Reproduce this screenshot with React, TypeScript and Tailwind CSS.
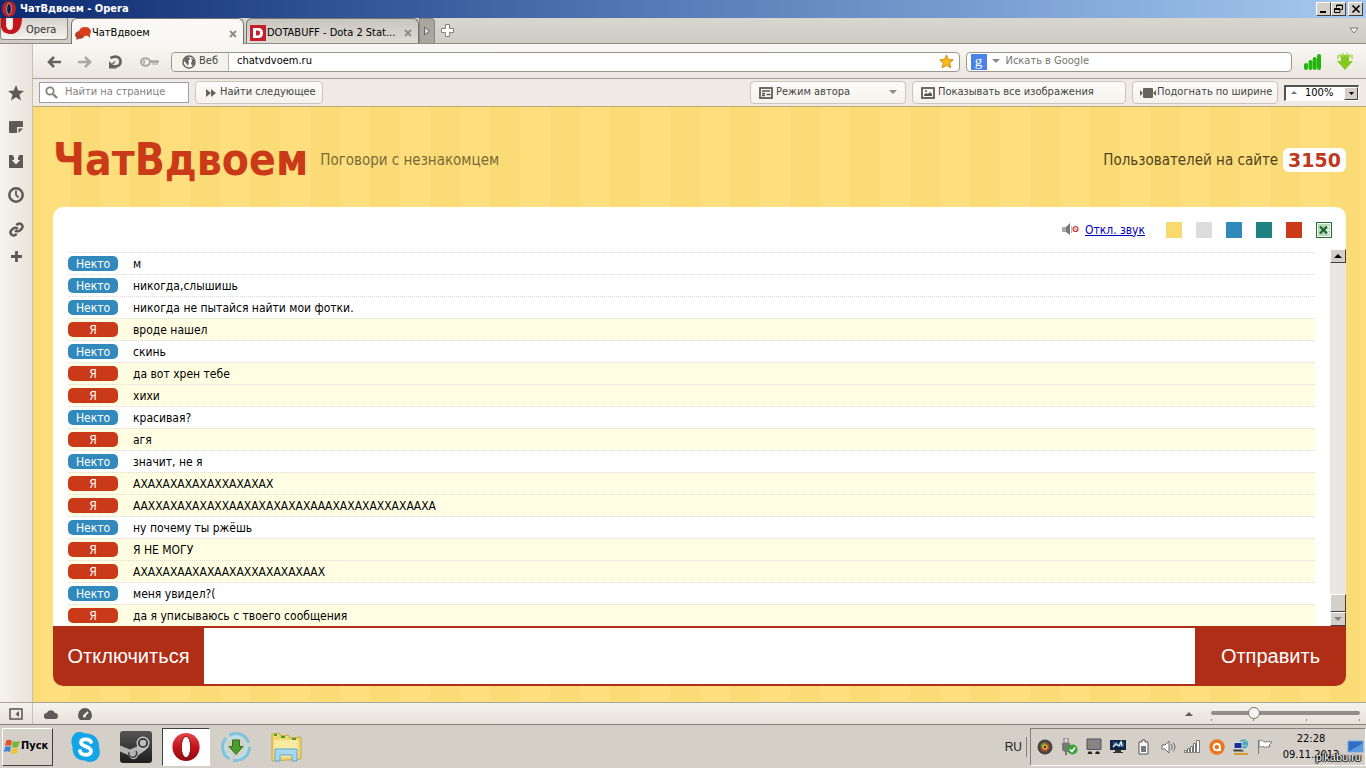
import React from "react";

type Author = "other" | "me";

const messages: { from: Author; text: string }[] = [
  { from: "other", text: "м" },
  { from: "other", text: "никогда,слышишь" },
  { from: "other", text: "никогда не пытайся найти мои фотки." },
  { from: "me", text: "вроде нашел" },
  { from: "other", text: "скинь" },
  { from: "me", text: "да вот хрен тебе" },
  { from: "me", text: "хихи" },
  { from: "other", text: "красивая?" },
  { from: "me", text: "агя" },
  { from: "other", text: "значит, не я" },
  { from: "me", text: "АХАХАХАХАХАХХАХАХАХ" },
  { from: "me", text: "ААХХАХАХАХАХХААХАХАХАХАХАААХАХАХАХХАХААХА" },
  { from: "other", text: "ну почему ты ржёшь" },
  { from: "me", text: "Я НЕ МОГУ" },
  { from: "me", text: "АХАХАХААХАХААХАХХАХАХАХААХ" },
  { from: "other", text: "меня увидел?(" },
  { from: "me", text: "да я уписываюсь с твоего сообщения" },
];

const themes = [
  { name: "Жёлтая", color: "bg-[#f9da71]" },
  { name: "Серая", color: "bg-[#dcdcdc]" },
  { name: "Синяя", color: "bg-[#318abb]" },
  { name: "Бирюзовая", color: "bg-[#1f8282]" },
  { name: "Красная", color: "bg-[#cb3a18]" },
];

const toolButton =
  "flex items-center h-[23px] rounded border border-[#c9c5be] bg-gradient-to-b from-[#fdfcfa] to-[#f5f2ea] text-[#444]";

function OperaLogo({ size }: { size: number }) {
  return (
    <svg width={size} height={size} viewBox="0 0 32 32" aria-hidden="true">
      <defs>
        <linearGradient id={`op${size}`} x1="0" y1="0" x2="0" y2="1">
          <stop offset="0" stopColor="#e8474a" />
          <stop offset="0.5" stopColor="#c4151c" />
          <stop offset="1" stopColor="#8d0b10" />
        </linearGradient>
      </defs>
      <ellipse cx="16" cy="16" rx="14.5" ry="15" fill={`url(#op${size})`} />
      <ellipse cx="16" cy="16" rx="5" ry="11.5" fill="#fff" stroke="#8d0b10" />
    </svg>
  );
}

function TitleBar() {
  const b =
    "flex h-[14px] w-[15px] items-center justify-center border border-t-white border-l-white border-r-[#404040] border-b-[#404040] bg-[#d4d0c8]";
  return (
    <header className="flex h-[18px] shrink-0 items-center bg-gradient-to-r from-[#0c2a70] via-[#5a7cb8] to-[#a6caf0] pl-[2px] pr-[3px] text-white">
      <svg width="14" height="16" viewBox="0 0 14 16" aria-hidden="true">
        <ellipse cx="7" cy="8" rx="7" ry="8" fill="#b5232b" />
        <ellipse cx="7" cy="8" rx="2.4" ry="5.6" fill="#0d2350" stroke="#e9a0a0" strokeWidth="0.8" />
      </svg>
      <h1 className="ml-1 flex-1 text-[11px] leading-[18px] font-bold">ЧатВдвоем - Opera</h1>
      <button className={b} aria-label="Свернуть">
        <svg width="11" height="10"><path d="M2 8h6" stroke="#000" strokeWidth="2" /></svg>
      </button>
      <button className={b} aria-label="Восстановить">
        <svg width="11" height="10" fill="none" stroke="#000">
          <path d="M3.500 3.500V1h6v4.500H8M3 1.500h7M1.500 4.500h5.500v4h-5.500zM1 5.500h6" />
        </svg>
      </button>
      <button className={`${b} ml-[2px]`} aria-label="Закрыть">
        <svg width="10" height="10"><path d="M1.500 1.500l7 7M8.500 1.500l-7 7" stroke="#000" strokeWidth="1.700" /></svg>
      </button>
    </header>
  );
}

function CloseX() {
  return (
    <svg width="8" height="8"><path d="M1 1l6 6M7 1L1 7" stroke="#8c8a85" strokeWidth="1.800" /></svg>
  );
}

function TabBar() {
  return (
    <nav className="flex h-[26px] shrink-0 items-end border-b border-[#8f8b84] bg-gradient-to-b from-[#d9d6d0] to-[#cfccc5] text-[11px]" aria-label="Вкладки">
      <button className="flex h-[22px] w-[68px] items-start self-start rounded-b border border-t-0 border-[#8b8780] bg-gradient-to-b from-[#d5d1ca] to-[#f5f3ef] leading-[24px]">
        <svg width="22" height="17" viewBox="0 0 22 17" aria-hidden="true">
          <path d="M0 0h21c0 9-4 16-11 16C5 16 1 14 0 9z" fill="#c4151c" />
          <path d="M5 0h7v7c0 4-1 5-3 5s-4-2-4-5z" fill="#f5efec" />
        </svg>
        <span className="ml-[3px] text-[#333]">Opera</span>
      </button>
      <div className="ml-[3px] -mb-px flex h-[26px] w-[173px] items-center rounded-t-md border border-b-0 border-[#77746e] bg-[#faf8f4] pt-1 pl-[3px] pr-[6px]">
        <svg width="16" height="13" viewBox="0 0 16 13" aria-hidden="true">
          <path d="M5 4c-3 0-5 1.800-5 4 0 1 .6 2 1.600 2.700L1.400 13l2.700-1.300C8 12 9.500 10 9.500 8z" fill="#b83a20" />
          <ellipse cx="10" cy="4.500" rx="6" ry="4.500" fill="#d8401c" />
          <path d="M12 8l3 3V7z" fill="#d8401c" />
        </svg>
        <span className="ml-px flex-1 truncate text-black">ЧатВдвоем</span>
        <button aria-label="Закрыть вкладку"><CloseX /></button>
      </div>
      <div className="ml-[2px] flex h-[25px] w-[173px] items-center rounded-t-md border border-b-0 border-[#77746e] bg-gradient-to-b from-[#c9c6bf] to-[#dedbd5] pt-1 pl-[3px] pr-[6px]">
        <svg width="16" height="16" viewBox="0 0 16 16" aria-hidden="true">
          <path d="M0 0h16v16H0z" fill="#c3202b" />
          <path d="M3 3h5c3.500 0 5 2 5 5s-1.500 5-5 5H3zm3 2.500v5h1.700c1.500 0 2.300-.8 2.300-2.500S9.200 5.500 7.700 5.500z" fill="#fff" fillRule="evenodd" />
        </svg>
        <span className="ml-px flex-1 whitespace-nowrap text-black">DOTABUFF - Dota 2 Stat...</span>
        <button aria-label="Закрыть вкладку"><CloseX /></button>
      </div>
      <button className="flex h-[25px] w-4 items-center justify-center rounded-tr border border-b-0 border-[#8b8780] bg-[#a9a6a0]" aria-label="Следующие вкладки">
        <svg width="8" height="10"><path d="M1.500 1l5 4-5 4z" fill="#ddd" stroke="#666" /></svg>
      </button>
      <button className="ml-[6px] self-center" aria-label="Новая вкладка">
        <svg className="block" width="13" height="13"><path d="M4.500.5h4v4h4v4h-4v4h-4v-4h-4v-4h4z" fill="#fff" stroke="#85827c" /></svg>
      </button>
      <button className="mr-[7px] ml-auto self-center" aria-label="Закрытые вкладки">
        <svg width="10" height="7"><path d="M1 1h8L5 6z" fill="#fff" stroke="#77746e" /></svg>
      </button>
    </nav>
  );
}

function AddressBar() {
  return (
    <div className="flex h-[35px] items-center border-b border-[#a5a19a] bg-gradient-to-b from-[#faf8f4] to-[#eae6df] pt-px pr-[13px] pl-[14px] text-[11px]">
      <div className="flex w-[124px] items-center justify-between text-[#66635e]">
        <button aria-label="Назад">
          <svg width="14" height="12" fill="none" stroke="currentColor" strokeWidth="2.600"><path d="M7 1L2 6l5 5M2 6h12" /></svg>
        </button>
        <button aria-label="Вперёд">
          <svg width="14" height="12" fill="none" stroke="#aaa7a1" strokeWidth="2.600"><path d="M7 1l5 5-5 5M12 6H0" /></svg>
        </button>
        <button aria-label="Обновить">
          <svg width="15" height="14" viewBox="0 0 15 14"><path d="M2.500 3.200c2-1.400 3.300-1.600 5-1.600 3 0 5 2 5 4.900s-2 5-5 5H5" fill="none" stroke="currentColor" strokeWidth="2.800" /><path d="M1 6v7.500h7.500z" fill="currentColor" /><path d="M4 9.500L7 6.500" stroke="currentColor" strokeWidth="1.500" /></svg>
        </button>
        <button className="mr-3" aria-label="Пароли">
          <svg width="19" height="10" fill="none" stroke="#aaa7a1"><ellipse cx="5.500" cy="5" rx="4.500" ry="3.700" strokeWidth="2" /><path d="M4 3.500v3" strokeWidth="2" /><path d="M9.500 4.500H19" strokeWidth="2.600" /><path d="M13.500 5v3M16.500 5v3" strokeWidth="1.600" /></svg>
        </button>
      </div>
      <form className="flex h-5 flex-1 items-center rounded border border-[#9a968f] bg-white" onSubmit={(e) => e.preventDefault()}>
        <button type="button" className="flex h-[18px] w-[57px] items-center rounded-l border-r border-[#bbb7b0] bg-[#f4f2ed] pl-[10px] text-[#444]">
          <svg width="14" height="14" viewBox="0 0 14 14" aria-hidden="true"><circle cx="7" cy="7" r="6" fill="#fff" stroke="#66635e" strokeWidth="1.500" /><path d="M3 3l4-1 1 2-2 2 1 1-1 4-2-3-2-2zM9 3l3 2v4l-2 2-1-3 1-2z" fill="#66635e" /></svg>
          <span className="ml-[3px]">Веб</span>
        </button>
        <input className="min-w-0 flex-1 px-2 text-black outline-none" aria-label="Адрес" defaultValue="chatvdvoem.ru" />
        <button type="button" className="mr-[5px]" aria-label="В закладки">
          <svg width="15" height="15" viewBox="0 0 15 15"><path d="M7.500 1l2 4.500 4.700.4-3.600 3.200 1.200 4.700-4.300-2.600-4.300 2.600 1.200-4.700L.8 5.900l4.700-.4z" fill="#fbb917" stroke="#d58a12" /></svg>
        </button>
      </form>
      <form className="ml-[6px] flex h-5 w-1/4 items-center rounded border border-[#9a968f] bg-white pl-1" onSubmit={(e) => e.preventDefault()}>
        <span className="flex h-4 w-4 items-center justify-center bg-[#4b82e8] pb-[2px] font-['Liberation_Serif',serif] text-[15px] leading-4 text-white">g</span>
        <svg className="ml-[5px]" width="8" height="5" aria-hidden="true"><path d="M0 0h8L4 4z" fill="#8c8a85" /></svg>
        <input className="ml-[6px] min-w-0 flex-1 outline-none placeholder:text-[#77746f]" aria-label="Поиск" placeholder="Искать в Google" />
      </form>
      <button className="ml-3" aria-label="Сигнал">
        <svg width="17" height="16" fill="#22b50c"><rect x="0" y="9" width="4" height="7" rx="2" /><rect x="4.500" y="6" width="4" height="10" rx="2" /><rect x="8.700" y="3" width="4" height="13" rx="2" /><rect x="13" y="0" width="4" height="16" rx="2" /></svg>
      </button>
      <button className="ml-4" aria-label="Загрузки">
        <svg width="16" height="18"><path d="M4 2h8v6h4l-8 9-8-9h4z" fill="#85c81e" /><path d="M1 2v4M15 2v4M3 1v3M13 1v3M6 0v4M10 0v4" stroke="#a5d850" strokeWidth="1.500" /></svg>
      </button>
    </div>
  );
}

function FindBar() {
  return (
    <div className="flex h-7 items-center gap-[6px] border-b border-[#b8a878] bg-[#efeae4] pr-[7px] pl-[6px] text-[11px]">
      <label className="flex h-[21px] w-[150px] items-center border border-[#9a9eb0] bg-white pl-[5px]">
        <svg width="13" height="13" fill="none" stroke="#85827c" aria-hidden="true"><circle cx="5" cy="5" r="3.700" strokeWidth="1.800" /><path d="M8 8l4 4" strokeWidth="2.400" /></svg>
        <input className="ml-[7px] min-w-0 flex-1 outline-none placeholder:text-[#85827f]" placeholder="Найти на странице" aria-label="Найти на странице" />
      </label>
      <button className={`${toolButton} mr-auto px-[6px]`}>
        <svg className="mx-1" width="10" height="8" fill="#66635e"><path d="M0 0l5 4-5 4zM5 0l5 4-5 4z" /></svg>
        <span>Найти следующее</span>
      </button>
      <label className={`${toolButton} w-[156px] px-2`}>
        <svg width="14" height="12" fill="none" stroke="#55524e" aria-hidden="true"><rect x="1" y="1" width="12" height="10" strokeWidth="1.700" /><path d="M3 4h8M3 6.500h3M3 8.500h3M7.500 7.500h4" strokeWidth="1.500" /></svg>
        <select className="ml-[3px] flex-1 appearance-none outline-none" aria-label="Режим отображения"><option>Режим автора</option></select>
        <svg width="8" height="5" aria-hidden="true"><path d="M0 0h8L4 4z" fill="#8c8a85" /></svg>
      </label>
      <button className={`${toolButton} w-[214px] px-2`}>
        <svg width="14" height="12" fill="none" stroke="#55524e"><rect x="1" y="1" width="12" height="10" strokeWidth="1.700" /><path d="M3 9V8l2-2 2 1 2-2 2 2v2z" fill="#55524e" stroke="none" /><circle cx="5" cy="4" r="1" fill="#55524e" stroke="none" /></svg>
        <span className="ml-[3px] whitespace-nowrap">Показывать все изображения</span>
      </button>
      <button className={`${toolButton} w-[146px] pl-[7px]`}>
        <svg className="shrink-0" width="16" height="10" fill="#66635e"><rect x="3" y="0" width="10" height="10" rx="1" /><path d="M0 2l3 3-3 3zM16 2l-3 3 3 3z" /></svg>
        <span className="ml-px whitespace-nowrap">Подогнать по ширине</span>
      </button>
      <label className="flex h-4 w-[75px] items-center border border-t-2 border-l-2 border-[#fff] border-t-[#55524e] border-l-[#55524e] bg-white pl-[5px] text-black">
        <svg width="6" height="4" aria-hidden="true"><path d="M0 3h6L3 0z" fill="#77746e" /></svg>
        <select className="ml-2 min-w-0 flex-1 appearance-none outline-none" aria-label="Масштаб"><option>100%</option></select>
        <span className="flex h-[13px] w-[14px] items-center justify-center border border-white border-r-[#404040] border-b-[#404040] bg-[#d4d0c8]">
          <svg width="5" height="3" aria-hidden="true"><path d="M0 0h5L2.500 3z" /></svg>
        </span>
      </label>
    </div>
  );
}

function SidePanel() {
  const item = "flex h-[34px] items-center justify-center";
  return (
    <aside className="flex w-[33px] shrink-0 flex-col items-center border-r border-[#c9c1a8] bg-gradient-to-r from-[#f6f3ed] to-[#e8e4dc] pt-8 text-[#5e5b56]">
      <button className={item} aria-label="Закладки"><svg width="16" height="16" viewBox="0 0 16 16"><path d="M8 0l2.200 5.500 5.800.4-4.500 3.700L13 15.500 8 12.300l-5 3.200 1.500-5.900L0 5.900l5.800-.4z" fill="currentColor" /></svg></button>
      <button className={item} aria-label="Заметки"><svg width="14" height="14"><path d="M1 1h12a1 1 0 011 1v5H8v6H1a1 1 0 01-1-1V2a1 1 0 011-1zM9.500 8.500H14L9.500 13z" fill="currentColor" /></svg></button>
      <button className={item} aria-label="Загрузки"><svg width="14" height="13"><path d="M0 0h4v1.500H5V5H2.800L7 9.500 11.200 5H9V1.500h1V0h4v13H0z" fill="currentColor" /></svg></button>
      <button className={item} aria-label="История"><svg width="16" height="16" fill="none" stroke="currentColor"><circle cx="8" cy="8" r="6.700" strokeWidth="2.500" /><path d="M8 3.500V8l2.500 2.500" strokeWidth="1.800" /></svg></button>
      <button className={item} aria-label="Ссылки"><svg width="15" height="15" viewBox="0 0 24 24" fill="none" stroke="currentColor" strokeWidth="4"><path d="M10 13a5 5 0 007.500.5l3-3a5 5 0 00-7-7l-1.800 1.700M14 11a5 5 0 00-7.500-.5l-3 3a5 5 0 007 7l1.800-1.700" /></svg></button>
      <button className="flex h-5 items-center" aria-label="Добавить панель"><svg width="11" height="11"><path d="M5.500 0v11M0 5.500h11" stroke="currentColor" strokeWidth="2.800" /></svg></button>
    </aside>
  );
}

function Message({ from, text }: { from: Author; text: string }) {
  const mine = from === "me";
  return (
    <li className={`flex h-[22px] shrink-0 items-center border-t border-dotted border-[#dcdcd2] ${mine ? "bg-[#fffee2]" : "bg-white"}`}>
      <span className={`h-[15px] w-[50px] rounded-[5px] text-center leading-4 text-white ${mine ? "bg-[#cb3a18]" : "bg-[#318abb]"}`}>
        {mine ? "Я" : "Некто"}
      </span>
      <span className="ml-[15px] text-black">{text}</span>
    </li>
  );
}

function ChatPage() {
  return (
    <main className="flex min-h-0 flex-1 flex-col bg-[repeating-linear-gradient(90deg,#fadb75_0_7px,#ffdf7d_7px_37px,#fadb75_37px_60px)] px-5 pb-4">
      <div className="flex h-[100px] shrink-0 items-center pt-[6px]">
        <h2 className="text-[44px] leading-none font-bold text-[#cb3a18]">ЧатВдвоем</h2>
        <p className="ml-3 flex-1 text-[15px] text-[#7a6a38]">Поговори с незнакомцем</p>
        <p className="text-[15px] text-[#4f431c]">Пользователей на сайте</p>
        <strong className="ml-[5px] h-6 rounded-md bg-white px-[5px] font-['DejaVu_Sans',sans-serif] text-[19px] leading-6 text-[#c0391f]">3150</strong>
      </div>
      <section className="flex min-h-0 flex-1 flex-col overflow-hidden rounded-[10px] bg-white text-[12px]">
        <div className="flex h-[42px] shrink-0 items-center justify-end gap-[14px] pt-[3px] pr-[14px]">
          <svg className="-mr-2" width="17" height="13" aria-hidden="true"><path d="M0 4h4v5H0z" fill="#aaa" /><path d="M4 4l4-4v12L4 9z" fill="#777" /><path d="M9.500 3v7" stroke="#bbb" /><circle cx="13.500" cy="6" r="2.500" fill="#fff" stroke="#c33" strokeWidth="1.200" /><path d="M12 4.500l3 3" stroke="#c33" /></svg>
          <a href="#sound" className="mr-[7px] text-[#00b] underline">Откл. звук</a>
          {themes.map((t) => (
            <button key={t.name} aria-label={t.name} className={`h-4 w-4 ${t.color}`} />
          ))}
          <button aria-label="Сохранить в Excel">
            <svg className="block" width="16" height="16"><rect x=".5" y=".5" width="15" height="15" fill="#f0f8f0" stroke="#2d6b35" /><path d="M2 2h12v12H2z" fill="#b9dab8" /><path d="M10 4h3v2h-2zM11 7h2v2h-2zM10 10h3v2h-3z" fill="#fff" /><path d="M4 4.500l7 7M11 4.500l-7 7" stroke="#1f6b2c" strokeWidth="2.400" /></svg>
          </button>
        </div>
        <div className="flex min-h-0 flex-1">
          <ul className="ml-[15px] flex min-w-0 flex-1 flex-col justify-end overflow-hidden">
            {messages.map((m, i) => (
              <Message key={i} {...m} />
            ))}
          </ul>
          <div className="ml-[15px] flex w-4 flex-col bg-[#e9e7e3]">
            <button className="flex h-[14px] items-center justify-center border border-white border-r-[#404040] border-b-[#404040] bg-[#d4d0c8]" aria-label="Вверх">
              <svg width="8" height="5"><path d="M0 4h8L4 0z" /></svg>
            </button>
            <div className="flex-1" />
            <div className="h-[18px] border border-white border-r-[#404040] border-b-[#404040] bg-[#d4d0c8]" />
            <button className="flex h-[14px] items-center justify-center border border-white border-r-[#404040] border-b-[#404040] bg-[#d4d0c8]" aria-label="Вниз">
              <svg width="8" height="5"><path d="M0 0h8L4 4z" fill="#85827c" /></svg>
            </button>
          </div>
        </div>
        <form className="flex h-[60px] shrink-0 bg-[#b02d16] font-['Liberation_Sans',sans-serif] text-[20px] text-white" onSubmit={(e) => e.preventDefault()}>
          <button type="button" className="w-[151px]">Отключиться</button>
          <input className="my-[2px] min-w-0 flex-1 bg-white px-3 text-black outline-none" aria-label="Сообщение" />
          <button type="submit" className="w-[151px]">Отправить</button>
        </form>
      </section>
    </main>
  );
}

function StatusBar() {
  return (
    <footer className="flex h-[22px] shrink-0 items-center border-t border-[#a8a49c] bg-gradient-to-b from-[#f5f2ec] to-[#e6e2da] pr-[6px] text-[#5e5b56]">
      <button className="flex h-full w-[33px] items-center justify-center border-r border-[#c5c1b9]" aria-label="Панели"><svg width="14" height="12"><rect x="1" y="1" width="12" height="10" fill="none" stroke="currentColor" strokeWidth="1.600" /><path d="M10 3v6L6.500 6z" fill="currentColor" /></svg></button>
      <button className="ml-[11px]" aria-label="Opera Link"><svg className="block" width="14" height="10"><path d="M3 10a3 3 0 01-.3-6A4.500 4.500 0 0111 4a3 3 0 010 6z" fill="currentColor" /></svg></button>
      <button className="ml-5" aria-label="Opera Turbo"><svg className="block" width="14" height="12"><path d="M2 12a7 7 0 1110 0z" fill="currentColor" /><path d="M6.500 7.500L10 4" stroke="#f0ede6" strokeWidth="1.800" /><circle cx="6.500" cy="8" r="1.600" fill="#f0ede6" /></svg></button>
      <button className="mr-[18px] ml-auto" aria-label="Меню масштаба"><svg className="block" width="8" height="4"><path d="M0 4h8L4 0z" fill="currentColor" /></svg></button>
      <div className="flex w-[149px] flex-col">
        <input type="range" aria-label="Масштаб страницы" min={0} max={100} defaultValue={27}
          className="h-3 w-full appearance-none bg-transparent [&::-webkit-slider-runnable-track]:h-1 [&::-webkit-slider-runnable-track]:rounded-full [&::-webkit-slider-runnable-track]:bg-[#918e88] [&::-webkit-slider-thumb]:-mt-1 [&::-webkit-slider-thumb]:h-3 [&::-webkit-slider-thumb]:w-3 [&::-webkit-slider-thumb]:appearance-none [&::-webkit-slider-thumb]:rounded-full [&::-webkit-slider-thumb]:border [&::-webkit-slider-thumb]:border-[#77746e] [&::-webkit-slider-thumb]:bg-[#f7f5f1]" />
        <svg width="149" height="2" stroke="#918e88" aria-hidden="true"><path d="M.5 0v2M42.500 0v2M95.500 0v2M148.500 0v2" /></svg>
      </div>
    </footer>
  );
}

function Tray() {
  return (
    <div className="flex items-center gap-2">
      <svg width="16" height="16"><circle cx="8" cy="8" r="7.500" fill="#444" /><circle cx="8" cy="8" r="4.500" fill="#b84c28" /><path d="M3.500 8a4.500 4.500 0 014.500-4.500V8z" fill="#5b9c3a" /><circle cx="8" cy="8" r="2.500" fill="#e8c23a" /><circle cx="8" cy="8" r="1.200" fill="#222" /></svg>
      <svg width="17" height="17"><path d="M3 0h4v5h2v5c0 3-1 3-3 4v3H4v-3c-2-1-3-1-3-4V5h2z" fill="#777" /><path d="M3 0h4v5H3z" fill="#ddd" stroke="#777" /><circle cx="11.500" cy="11.500" r="5" fill="#36a436" /><path d="M9 11.500l2 2 3-4" stroke="#fff" strokeWidth="1.700" fill="none" /></svg>
      <svg width="16" height="17"><path d="M1 1h14v10.500H1z" fill="#858585" stroke="#555" /><path d="M2.500 13.500h3l1 2.500h-5zM10 13.500h3l1 2.500H9z" fill="#222" /></svg>
      <svg width="17" height="15"><path d="M0 1h16v10H0z" fill="#15263c" /><path d="M3 3h5v4H3zM9 5l2-3 3 2v4h-4z" fill="#2a5a94" /><path d="M3 8l3-3 3 2 2-4 1 4" stroke="#cfe8f8" strokeWidth="1.500" fill="none" /><path d="M5 11h6v2h2v1H3v-1h2z" fill="#333" /></svg>
      <svg className="mx-[3px]" width="11" height="16"><path d="M1 3h3V1h3v2h3v12H1z" fill="#fff" stroke="#555" /><path d="M3 7h5v6H3z" fill="#777" /></svg>
      <svg className="ml-px" width="15" height="14" fill="#fff" stroke="#666"><path d="M1 5h3l4-4v12L4 9H1z" /><path d="M10 4c1.500 2 1.500 4 0 6M12 2.500c2.500 3 2.500 6 0 9" fill="none" /></svg>
      <svg width="17" height="13" fill="#fff" stroke="#777"><path d="M.5 10.500h2v2h-2zM3.500 8.500h2v4h-2zM6.500 6.500h2v6h-2zM9.500 3.500h2v9h-2zM12.500.5h3v12h-3z" /></svg>
      <svg width="16" height="16"><circle cx="8" cy="8" r="7.700" fill="#ee751d" /><path d="M11 12V8a3.200 3.200 0 10-3 3.200c2 0 3-1.300 3-3" fill="none" stroke="#fff" strokeWidth="2" /></svg>
      <svg width="16" height="16"><circle cx="10.500" cy="5" r="4.700" fill="#4aa5cf" /><path d="M8 3c2-2 3 0 5-1M7 7c3-1 4 1 7-1" stroke="#a8dc90" fill="none" /><path d="M1 3.500h8v6H1z" fill="#1b2f9c" stroke="#ddd" /><path d="M0 10.500h9l2 2H1z" fill="#444" /><path d="M1 15h14" stroke="#d99a28" strokeWidth="2" /></svg>
      <svg width="17" height="16" fill="#fff" stroke="#777"><path d="M1.500 1v14M2 2c3-2 4 1 6 1s3-1 7 0l-3 3 1 2c-2-1-4 1-6 0s-3 0-5 0z" /></svg>
    </div>
  );
}

function Taskbar() {
  return (
    <footer className="relative flex h-11 shrink-0 items-center border-t border-[#85827c] bg-[#d4d0c8] pl-[2px]">
      <button className="flex h-[38px] w-[51px] items-center border border-t-white border-l-white border-r-[#404040] border-b-[#404040] pl-px text-[11px] font-bold">
        <svg width="17" height="16" viewBox="0 0 17 16" aria-hidden="true"><path d="M2 2c2-2 4-1 6 0L7 7C5 6 3 6 1 7z" fill="#e2552b" /><path d="M9 2c2 1 4 1 7 0l-2 6c-2 1-4 1-6 0z" fill="#74b73a" /><path d="M1 8c2-1 4-1 6 0l-1 5c-2-1-4-1-6 0z" fill="#3f86d8" /><path d="M8 9c2 1 4 1 6 0l-1 5c-2 1-4 1-6 0z" fill="#f3c12e" /></svg>
        <span>Пуск</span>
      </button>
      <div className="ml-[17px] flex flex-1 items-center">
        <button className="w-8" aria-label="Skype">
          <svg width="32" height="32" viewBox="0 0 32 32"><path d="M9 1c3 0 4 .5 6 1.500C24 2 30 8 29 17c3 7-2 14-9 14-3 0-4-1-5-1.500C7 30 2 24 2.500 16-.500 9 3 1 9 1z" fill="#12a5e8" /><path d="M21 11c-1-3-9-4-10 0-.6 5 10 4 10 9 0 5-10 5-11 0" fill="none" stroke="#fff" strokeWidth="3.800" strokeLinecap="round" /></svg>
        </button>
        <button className="ml-[18px] w-8" aria-label="Steam">
          <svg width="32" height="32" viewBox="0 0 32 32"><defs><linearGradient id="st" x1="0" y1="0" x2="0" y2="1"><stop offset="0" stopColor="#555" /><stop offset="1" stopColor="#1f1e1e" /></linearGradient></defs><rect width="32" height="32" rx="3" fill="url(#st)" /><path d="M0 14.500l10 4 7-3 1-5 11 5-4 4-7 5c-1 5-8 5-9 0l-9-4z" fill="#b5b5b5" /><circle cx="23" cy="12" r="6.500" fill="#c9c9c9" /><circle cx="23" cy="12" r="4.200" fill="#bbb" stroke="#333" strokeWidth="1.800" /><path d="M9 21a4 4 0 107-1" fill="none" stroke="#444" strokeWidth="1.500" /></svg>
        </button>
        <button className="ml-[10px] flex h-[38px] w-12 items-center justify-center border border-[#404040] border-r-white border-b-white bg-white" aria-label="Opera"><OperaLogo size={30} /></button>
        <button className="ml-[10px] w-8" aria-label="MediaGet">
          <svg width="32" height="32" viewBox="0 0 32 32" fill="none"><circle cx="16" cy="16" r="13.500" stroke="#7cc5dc" strokeWidth="3" strokeDasharray="24 4" /><circle cx="16" cy="16" r="10.500" stroke="#b5e2ee" strokeWidth="2" strokeDasharray="16 4" /><path d="M12.500 9h7v6.500H23l-7 8-7-8h3.500z" fill="#4a9e2c" stroke="#2f6f20" /></svg>
        </button>
        <button className="ml-[18px] w-8" aria-label="Проводник">
          <svg width="34" height="32" viewBox="0 0 34 32"><path d="M2 3l7-1 2 3 7-1 2 3 11-1v22l-29 2z" fill="#efd670" stroke="#c9a83e" /><path d="M4 9h24v17H4z" fill="#fae9a0" /><path d="M4 4h3M11 6h4M22 8h4" stroke="#4a9e2c" strokeWidth="2" /><path d="M5 18h22v12h-5v-6H10v6H5z" fill="#a8d8ee" stroke="#5fa8d0" /></svg>
        </button>
      </div>
      <span className="font-['Liberation_Sans',sans-serif] text-[12px] text-[#222]">RU</span>
      <span className="mr-[3px] ml-1 h-5 border-r border-[#85827c]" />
      <div className="flex h-[38px] items-center border border-[#85827c] border-r-white border-b-white pl-[6px]">
        <Tray />
        <div className="ml-[7px] w-[60px] text-center text-[11px] leading-4 text-black">
          <div>22:28</div>
          <div>09.11.2013</div>
        </div>
        <button className="ml-[6px] w-[18px]" aria-label="Свернуть все окна">
          <svg width="17" height="14"><path d="M1 1h15v11H1z" fill="#2d6fc4" stroke="#7ba8dc" /><path d="M1 12L16 3v9z" fill="#5a9ae0" /></svg>
        </button>
      </div>
      <span className="absolute right-[5px] bottom-1 font-['Liberation_Sans',sans-serif] text-[11px] leading-[14px] text-white [text-shadow:0_0_1px_#000,1px_0_1px_#000,-1px_0_1px_#000,0_1px_1px_#000]">pikabu.ru</span>
    </footer>
  );
}

export default function App() {
  return (
    <div className="flex h-screen flex-col overflow-hidden bg-[#d4d0c8] font-['DejaVu_Sans_Condensed','Noto_Sans',sans-serif]">
      <TitleBar />
      <TabBar />
      <div className="flex min-h-0 flex-1">
        <SidePanel />
        <div className="flex min-w-0 flex-1 flex-col">
          <AddressBar />
          <FindBar />
          <ChatPage />
        </div>
      </div>
      <StatusBar />
      <Taskbar />
    </div>
  );
}
